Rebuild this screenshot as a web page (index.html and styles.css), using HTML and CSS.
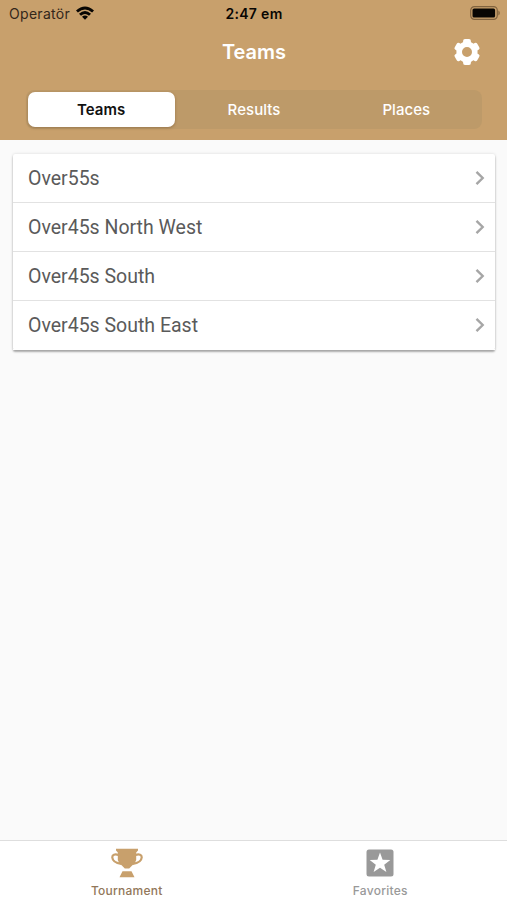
FILE: index.html
```html
<!DOCTYPE html>
<html lang="en">
<head>
<meta charset="utf-8">
<title>Teams</title>
<link rel="stylesheet" href="styles.css">
</head>
<body>
<header class="header">
  <div class="status">
    <div class="carrier"><span class="carrier-name">Operatör</span>
      <svg class="wifi" viewBox="0 0 18 14"><path d="M0 4.600Q9-3.600 18 4.600L16.100 6.500Q9 .4 1.900 6.500Z"/><path d="M3 7.700Q9 2.400 15 7.700L13 9.700Q9 6.400 5 9.700Z"/><path d="M6 10.700Q9 8.300 12 10.700L9 13.700Z"/></svg>
    </div>
    <div class="time">2:47 em</div>
    <svg class="battery" viewBox="0 0 30 14"><rect x=".7" y=".7" width="26.6" height="12.600" rx="3.700" fill="none" stroke="#80633f" stroke-width="1.200"/><rect x="2.500" y="2.400" width="22.600" height="9.200" rx="1.600"/><path d="M28.400 4.600q1.400.7 1.400 2.400t-1.400 2.400z" fill="#80633f"/></svg>
  </div>
  <div class="titlebar">
    <h1 class="title">Teams</h1>
    <svg class="gear" viewBox="-14 -14 28 28">
      <defs><rect id="tooth" x="-3.900" y="-13" width="7.800" height="6" rx="1.900"/></defs>
      <circle r="7.800" fill="none" stroke="currentColor" stroke-width="5.600"/>
      <use href="#tooth"/><use href="#tooth" transform="rotate(60)"/><use href="#tooth" transform="rotate(120)"/><use href="#tooth" transform="rotate(180)"/><use href="#tooth" transform="rotate(240)"/><use href="#tooth" transform="rotate(300)"/>
    </svg>
  </div>
  <nav class="segments">
    <div class="segment active">Teams</div>
    <div class="segment">Results</div>
    <div class="segment">Places</div>
  </nav>
</header>
<main class="content">
  <ul class="list">
    <li class="row"><span>Over55s</span><svg class="chevron" viewBox="0 0 10 16"><path d="M1.500 1.800L7.700 8L1.500 14.200"/></svg></li>
    <li class="row"><span>Over45s North West</span><svg class="chevron" viewBox="0 0 10 16"><path d="M1.500 1.800L7.700 8L1.500 14.200"/></svg></li>
    <li class="row"><span>Over45s South</span><svg class="chevron" viewBox="0 0 10 16"><path d="M1.500 1.800L7.700 8L1.500 14.200"/></svg></li>
    <li class="row"><span>Over45s South East</span><svg class="chevron" viewBox="0 0 10 16"><path d="M1.500 1.800L7.700 8L1.500 14.200"/></svg></li>
  </ul>
</main>
<footer class="tabbar">
  <div class="tab selected">
    <svg class="tab-icon" viewBox="0 0 32 30"><path d="M5 .8h22v1.600L25.200 4.600v7.400q-.5 3-4.300 5.800l-2.700 2.700h-4.400l-2.700-2.700q-3.800-2.800-4.300-5.800V4.600L5 2.400z"/><path d="M7.500 7C3.800 5.600 1.100 6.800 1.300 9.500c.3 3.700 4 5.700 9 6.300M24.500 7c3.700-1.400 6.400-.2 6.200 2.500-.3 3.700-4 5.700-9 6.300" fill="none" stroke="currentColor" stroke-width="2.200"/><path d="M11.500 23.300h9l3 6H8.500z"/></svg>
    <span>Tournament</span>
  </div>
  <div class="tab">
    <svg class="tab-icon" viewBox="0 0 32 30"><rect x="2.500" y="1.500" width="27" height="27" rx="2.500"/><path fill="#fff" d="M16 4.500l2.600 7.300 7.700.2-6.100 4.700 2.200 7.400L16 19.700l-6.400 4.400 2.200-7.400L5.700 12l7.700-.2z"/></svg>
    <span>Favorites</span>
  </div>
</footer>
</body>
</html>
```
FILE: styles.css
```css
* { box-sizing: border-box; }
body {
  margin: 0;
  height: 900px;
  display: flex;
  flex-direction: column;
  background: #fafafa;
  font-family: Inter, "Liberation Sans", sans-serif;
}
svg { display: block; fill: currentColor; }
.header { height: 140px; background: #c8a06c; color: #fff; }
.status {
  height: 27px;
  padding: 0 7px 0 9px;
  display: grid;
  grid-template-columns: 1fr auto 1fr;
  align-items: center;
  color: #080603;
  font-size: 14px;
}
.carrier { display: flex; align-items: center; gap: 6px; }
.carrier-name { color: #33271a; letter-spacing: .3px; }
.wifi { width: 18px; height: 14px; margin-top: -1px; }
.time { font-weight: 600; letter-spacing: .3px; margin-right: 1px; }
.battery { width: 30px; height: 14px; justify-self: end; margin-top: -1px; }
.titlebar {
  height: 50px;
  padding: 0 26px 0 55px;
  display: grid;
  grid-template-columns: 1fr 28px;
  align-items: center;
}
.title { margin: 0; font-size: 20px; line-height: 24px; font-weight: 600; text-align: center; }
.gear { width: 28px; height: 28px; }
.segments {
  height: 39px;
  margin: 13px 25px 0 26px;
  padding: 2px;
  display: grid;
  grid-template-columns: repeat(3, 1fr);
  column-gap: 5px;
  border-radius: 8px;
  background: #bd9a69;
}
.segment {
  display: flex;
  align-items: center;
  justify-content: center;
  font-size: 15px;
  font-weight: 500;
  letter-spacing: .05px;
  border-radius: 7px;
}
.active { padding-right: 1px; background: #fff; color: #111; font-weight: 600; box-shadow: 0 1px 3px rgba(80, 50, 20, .35); }
.content { flex: 1; padding: 14px 12px 0 13px; }
.list {
  margin: 0;
  padding: 0;
  list-style: none;
  background: #fff;
  border-radius: 2px;
  box-shadow: 0 2px 2px rgba(0, 0, 0, .3), 0 0 3px rgba(0, 0, 0, .14);
}
.row {
  height: 49px;
  padding: 0 10px 0 15px;
  display: flex;
  align-items: center;
  justify-content: space-between;
  border-bottom: 1px solid #e2e2e2;
  font-family: Roboto, sans-serif;
  font-size: 19.5px;
  color: #5a5a5a;
}
.row:last-child { border-bottom-color: #fff; }
.chevron { width: 10px; height: 16px; fill: none; stroke: #a6a6a6; stroke-width: 2.4; }
.tabbar {
  height: 60px;
  display: grid;
  grid-template-columns: 1fr 1fr;
  background: #fff;
  border-top: 1px solid #dedede;
}
.tab {
  padding-top: 7px;
  display: flex;
  flex-direction: column;
  align-items: center;
  gap: 5px;
  color: #999;
  font-size: 12px;
  line-height: 15px;
  font-weight: 500;
  letter-spacing: .25px;
}
.selected { color: #c8a06c; }
.selected span { color: #92775a; }
.tab-icon { width: 32px; height: 30px; }
```
